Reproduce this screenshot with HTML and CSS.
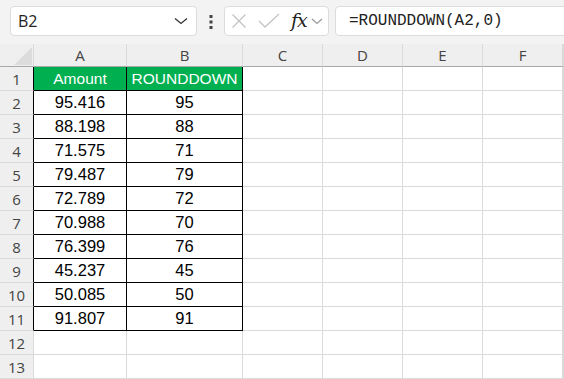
FILE: index.html
```html
<!DOCTYPE html>
<html lang="en">
<head>
  <meta charset="UTF-8" />
  <title>ROUNDDOWN - Sheet</title>
  <link rel="stylesheet" href="styles.css">
</head>
<body>
  <div class="toolbar">
    <div class="namebox">
      <span>B2</span>
      <svg class="chev" width="14" height="8" viewBox="0 0 14 8"><path d="M1 1.5 L7 6.5 L13 1.5" fill="none" stroke="#333" stroke-width="1.3"/></svg>
    </div>
    <div class="dots">
      <svg width="4" height="14" viewBox="0 0 4 14"><rect x="0.5" y="0" width="3" height="3" fill="#444"/><rect x="0.5" y="5.5" width="3" height="3" fill="#444"/><rect x="0.5" y="11" width="3" height="3" fill="#444"/></svg>
    </div>
    <div class="fxbox">
      <svg width="16" height="16" viewBox="0 0 16 16"><path d="M1.5 1.5 L14.5 14.5 M14.5 1.5 L1.5 14.5" stroke="#c4c4c4" stroke-width="1.3" fill="none"/></svg>
      <svg width="22" height="16" viewBox="0 0 22 16"><path d="M1 8 L7 14 L21 1" stroke="#c4c4c4" stroke-width="1.3" fill="none"/></svg>
      <span class="fx">fx</span>
      <svg width="12" height="7" viewBox="0 0 12 7"><path d="M1 1 L6 5.5 L11 1" fill="none" stroke="#999" stroke-width="1.2"/></svg>
    </div>
    <div class="formula">=ROUNDDOWN(A2,0)</div>
  </div>

  <div class="sheet">
    <div class="hd corner"><svg width="18" height="18" viewBox="0 0 18 18"><polygon points="18,0 18,18 0,18" fill="#dcdcdc"/></svg></div>
    <div class="hd">A</div><div class="hd">B</div><div class="hd">C</div><div class="hd">D</div><div class="hd">E</div><div class="hd">F</div><div class="hd"></div>

    <div class="rh edge">1</div><div class="c t green">Amount</div><div class="c t green">ROUNDDOWN</div><div class="c"></div><div class="c"></div><div class="c"></div><div class="c"></div><div class="c"></div>
    <div class="rh edge">2</div><div class="c t">95.416</div><div class="c t">95</div><div class="c"></div><div class="c"></div><div class="c"></div><div class="c"></div><div class="c"></div>
    <div class="rh edge">3</div><div class="c t">88.198</div><div class="c t">88</div><div class="c"></div><div class="c"></div><div class="c"></div><div class="c"></div><div class="c"></div>
    <div class="rh edge">4</div><div class="c t">71.575</div><div class="c t">71</div><div class="c"></div><div class="c"></div><div class="c"></div><div class="c"></div><div class="c"></div>
    <div class="rh edge">5</div><div class="c t">79.487</div><div class="c t">79</div><div class="c"></div><div class="c"></div><div class="c"></div><div class="c"></div><div class="c"></div>
    <div class="rh edge">6</div><div class="c t">72.789</div><div class="c t">72</div><div class="c"></div><div class="c"></div><div class="c"></div><div class="c"></div><div class="c"></div>
    <div class="rh edge">7</div><div class="c t">70.988</div><div class="c t">70</div><div class="c"></div><div class="c"></div><div class="c"></div><div class="c"></div><div class="c"></div>
    <div class="rh edge">8</div><div class="c t">76.399</div><div class="c t">76</div><div class="c"></div><div class="c"></div><div class="c"></div><div class="c"></div><div class="c"></div>
    <div class="rh edge">9</div><div class="c t">45.237</div><div class="c t">45</div><div class="c"></div><div class="c"></div><div class="c"></div><div class="c"></div><div class="c"></div>
    <div class="rh edge">10</div><div class="c t">50.085</div><div class="c t">50</div><div class="c"></div><div class="c"></div><div class="c"></div><div class="c"></div><div class="c"></div>
    <div class="rh edge">11</div><div class="c t">91.807</div><div class="c t">91</div><div class="c"></div><div class="c"></div><div class="c"></div><div class="c"></div><div class="c"></div>
    <div class="rh">12</div><div class="c"></div><div class="c"></div><div class="c"></div><div class="c"></div><div class="c"></div><div class="c"></div><div class="c"></div>
    <div class="rh">13</div><div class="c"></div><div class="c"></div><div class="c"></div><div class="c"></div><div class="c"></div><div class="c"></div><div class="c"></div>
  </div>
</body>
</html>
```

FILE: styles.css
```css
html, body {
  margin: 0;
  padding: 0;
  overflow: hidden;
}
body {
  font-family: "Open Sans", "Noto Sans", sans-serif;
  background: #fff;
  width: 564px;
  height: 379px;
}
.toolbar {
  display: flex;
  align-items: center;
  height: 44px;
  box-sizing: border-box;
  padding: 6px 0 8px 10px;
  background: #f3f3f3;
}
.namebox {
  width: 187px;
  height: 30px;
  box-sizing: border-box;
  background: #fff;
  border: 1px solid #dcdcdc;
  border-radius: 4px;
  display: flex;
  align-items: center;
  justify-content: space-between;
  padding: 0 8px 0 7px;
  font-size: 16px;
  color: #222;
}
.dots {
  width: 27px;
  display: flex;
  justify-content: center;
  padding-top: 1px;
}
.fxbox {
  width: 105px;
  height: 30px;
  box-sizing: border-box;
  background: #fff;
  border: 1px solid #dcdcdc;
  border-radius: 4px;
  display: flex;
  align-items: center;
  gap: 11px;
  padding: 0 0 0 6px;
}
.fxbox .fx {
  font-family: "DejaVu Serif", "Liberation Serif", serif;
  font-style: italic;
  font-size: 19px;
  color: #222;
  margin: 0 -7px 2px 0;
  letter-spacing: -1px;
}
.formula {
  flex: 1;
  height: 30px;
  box-sizing: border-box;
  margin: 0 -10px 0 6px;
  background: #fff;
  border: 1px solid #dcdcdc;
  border-radius: 4px;
  display: flex;
  align-items: center;
  padding-left: 13px;
  font-family: "Liberation Mono", "DejaVu Sans Mono", monospace;
  font-size: 16px;
  color: #222;
}
.sheet {
  display: grid;
  grid-template-columns: 34px 93px 116px 80px 80px 80px 80px 1fr;
  grid-template-rows: 23px repeat(13, 24px);
}
.hd, .rh, .c {
  box-sizing: border-box;
  border-right: 1px solid #dadada;
  border-bottom: 1px solid #dadada;
  display: flex;
  align-items: center;
  justify-content: center;
}
.hd {
  background: #efefef;
  border-bottom-color: #a8a8a8;
  color: #444;
  font-size: 15px;
}
.corner {
  justify-content: flex-end;
  align-items: flex-end;
  padding: 0 1px 1px 0;
}
.rh {
  background: #efefef;
  color: #444;
  font-size: 15px;
}
.rh.edge {
  border-right-color: #000;
}
.c.t {
  border-right-color: #000;
  border-bottom-color: #000;
  font-family: "Liberation Sans", Arial, sans-serif;
  font-size: 16.5px;
  color: #000;
}
.c.green {
  background: #00b050;
  color: #fff;
  font-size: 15.5px;
}
```
